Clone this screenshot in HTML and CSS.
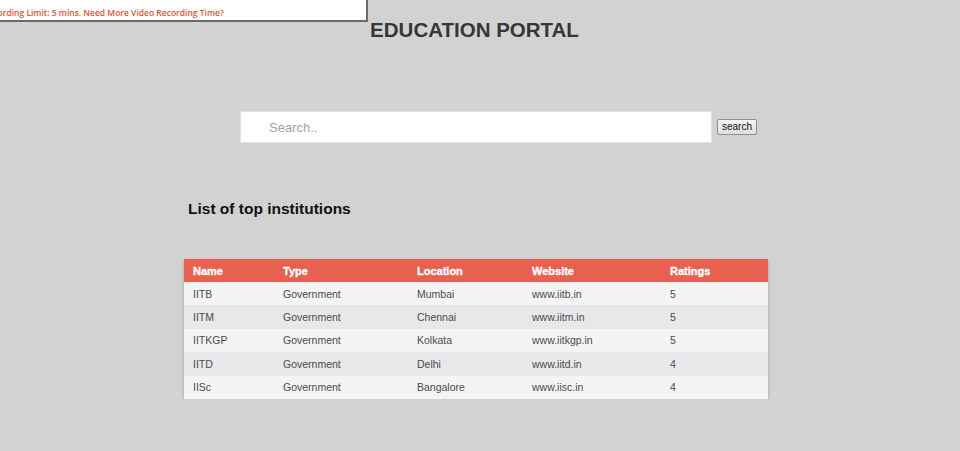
FILE: index.html
```html
<!DOCTYPE html>
<html>
<head>
<meta charset="utf-8">
<link rel="stylesheet" href="styles.css">
</head>
<body>
<div class="rec-banner"><span class="rec-text">Recording Limit: 5 mins. Need More Video Recording Time?</span></div>
<div class="page">
  <h1 class="title">EDUCATION PORTAL</h1>
  <div class="content">
    <form class="search-row">
      <input class="search-input" type="text" placeholder="Search..">
      <button class="search-btn" type="button">search</button>
    </form>
    <h2 class="list-title">List of top institutions</h2>
    <table class="inst-table">
      <thead>
        <tr><th class="c1">Name</th><th class="c2">Type</th><th class="c3">Location</th><th class="c4">Website</th><th class="c5">Ratings</th></tr>
      </thead>
      <tbody>
        <tr><td>IITB</td><td>Government</td><td>Mumbai</td><td>www.iitb.in</td><td>5</td></tr>
        <tr><td>IITM</td><td>Government</td><td>Chennai</td><td>www.iitm.in</td><td>5</td></tr>
        <tr><td>IITKGP</td><td>Government</td><td>Kolkata</td><td>www.iitkgp.in</td><td>5</td></tr>
        <tr><td>IITD</td><td>Government</td><td>Delhi</td><td>www.iitd.in</td><td>4</td></tr>
        <tr><td>IISc</td><td>Government</td><td>Bangalore</td><td>www.iisc.in</td><td>4</td></tr>
      </tbody>
    </table>
  </div>
</div>
</body>
</html>
```
FILE: styles.css
```css
html, body {
  margin: 0;
  padding: 0;
  background: #d3d2d3;
  font-family: "Liberation Sans", Arial, sans-serif;
}
.rec-banner {
  position: absolute;
  left: 0;
  top: 0;
  width: 366px;
  height: 20px;
  background: #fff;
  border-right: 2px solid #6b6b6b;
  border-bottom: 2px solid #6b6b6b;
  overflow: hidden;
  white-space: nowrap;
}
.rec-text {
  display: block;
  margin-left: -17px;
  margin-top: 7px;
  font-family: "Open Sans", "Noto Sans", sans-serif;
  font-size: 8.5px;
  font-weight: 600;
  color: #e0542f;
  line-height: 12px;
}
.page {
  width: 952px;
}
.title {
  margin: 0;
  padding: 18px 3px 0 0;
  text-align: center;
  font-size: 20.5px;
  line-height: 24px;
  font-weight: bold;
  color: #363636;
}
.content {
  width: 584px;
  margin: 0 auto;
}
.search-row {
  display: flex;
  align-items: center;
  margin: 69px 0 0 56px;
}
.search-input {
  box-sizing: border-box;
  width: 472px;
  height: 32px;
  border: 1px solid #e2e2e2;
  border-radius: 2px;
  background: #fff;
  padding: 0 0 0 28px;
  font-family: "Liberation Sans", Arial, sans-serif;
  font-size: 13px;
  color: #333;
  outline: none;
}
.search-input::placeholder {
  color: #a3a3a3;
}
.search-btn {
  margin-left: 5px;
  height: 16px;
  padding: 0 4px;
  font-family: "Liberation Sans", Arial, sans-serif;
  font-size: 10px;
  line-height: 12px;
  color: #111;
  background: linear-gradient(#f6f6f6, #dedede);
  border: 1px solid #8f8f8f;
  border-radius: 2px;
}
.list-title {
  margin: 56px 0 0 4px;
  font-size: 15.5px;
  line-height: 20px;
  font-weight: bold;
  color: #111;
}
.inst-table {
  margin-top: 40px;
  width: 584px;
  border-collapse: collapse;
  table-layout: fixed;
  box-shadow: 0 1px 3px rgba(0,0,0,0.25);
}
.inst-table th {
  background: #e8604f;
  color: #fff;
  font-size: 11px;
  font-weight: bold;
  -webkit-text-stroke: 0.35px #fff;
  text-align: left;
  height: 23px;
  padding: 0 0 0 9px;
}
.c1 { width: 81px; }
.c2 { width: 125px; }
.c3 { width: 106px; }
.c4 { width: 129px; }
.c5 { width: 98px; }
.inst-table td {
  height: 23.4px;
  padding: 0 0 0 9px;
  font-size: 10.5px;
  color: #4a4a4a;
}
.inst-table tbody tr:nth-child(odd) { background: #f4f4f5; }
.inst-table tbody tr:nth-child(even) { background: #e8e8ea; }
```
